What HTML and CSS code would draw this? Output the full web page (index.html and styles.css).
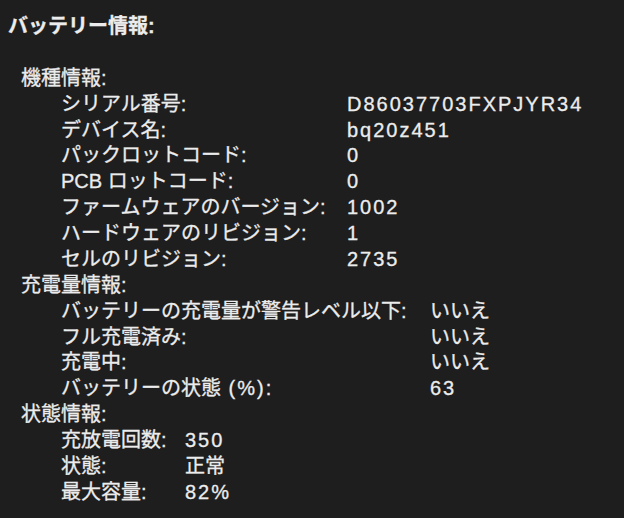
FILE: index.html
```html
<!DOCTYPE html>
<html lang="ja">
<head>
<meta charset="utf-8">
<link rel="stylesheet" href="styles.css">
</head>
<body>
<main class="page">
  <h1 class="title">バッテリー情報:</h1>

  <section class="group">
    <h2 class="group-head">機種情報:</h2>
    <dl class="kv kv--model">
      <dt>シリアル番号:</dt><dd class="lat">D86037703FXPJYR34</dd>
      <dt>デバイス名:</dt><dd class="lat">bq20z451</dd>
      <dt>パックロットコード:</dt><dd class="lat">0</dd>
      <dt>PCB ロットコード:</dt><dd class="lat">0</dd>
      <dt>ファームウェアのバージョン:</dt><dd class="lat">1002</dd>
      <dt>ハードウェアのリビジョン:</dt><dd class="lat">1</dd>
      <dt>セルのリビジョン:</dt><dd class="lat">2735</dd>
    </dl>
  </section>

  <section class="group">
    <h2 class="group-head">充電量情報:</h2>
    <dl class="kv kv--charge">
      <dt>バッテリーの充電量が警告レベル以下:</dt><dd>いいえ</dd>
      <dt>フル充電済み:</dt><dd>いいえ</dd>
      <dt>充電中:</dt><dd>いいえ</dd>
      <dt>バッテリーの状態<span class="lat"> (%)</span>:</dt><dd class="lat">63</dd>
    </dl>
  </section>

  <section class="group">
    <h2 class="group-head">状態情報:</h2>
    <dl class="kv kv--status">
      <dt>充放電回数:</dt><dd class="lat">350</dd>
      <dt>状態:</dt><dd>正常</dd>
      <dt>最大容量:</dt><dd class="lat">82%</dd>
    </dl>
  </section>
</main>
</body>
</html>
```

FILE: styles.css
```css
html, body {
  margin: 0;
  padding: 0;
  background: #1e1e1e;
}

body {
  color: #ececec;
  font-family: "Liberation Sans", "Noto Sans CJK JP", sans-serif;
  font-size: 20px;
  font-weight: 400;
  line-height: 25.875px;
  -webkit-text-stroke: 0.3px currentColor;
}

.page {
  padding: 14px 8px 0 8px;
}

.title {
  margin: 0 0 25.875px 0;
  font-size: 20px;
  font-weight: 700;
  line-height: 25.875px;
}

.group {
  padding-left: 13px;
}

.group-head {
  margin: 0;
  font-size: 20px;
  font-weight: 400;
  line-height: 25.875px;
}

.kv {
  display: grid;
  margin: 0;
  padding-left: 40px;
}

.kv dt,
.kv dd {
  margin: 0;
  white-space: nowrap;
}

.kv--model { grid-template-columns: 286px auto; }
.kv--charge { grid-template-columns: 369px auto; }
.kv--status { grid-template-columns: 124px auto; }

.lat {
  letter-spacing: 2px;
}
```
